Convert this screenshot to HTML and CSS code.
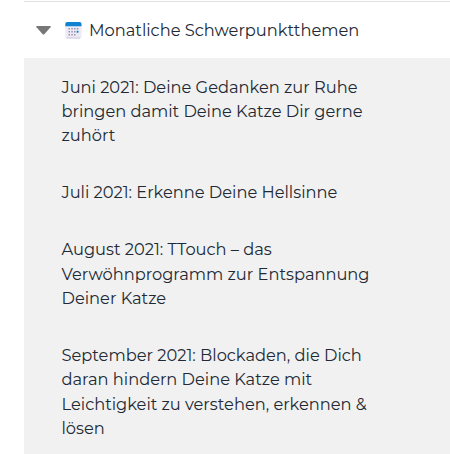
FILE: index.html
```
<!DOCTYPE html>
<html lang="de">
<head>
    <meta charset="UTF-8">
    <title>Monatliche Schwerpunktthemen</title>
    <link rel="stylesheet" href="styles.css">
</head>
<body>
    <nav class="menu">
        <div class="menu-header">
            <svg class="arrow" width="15" height="9" viewBox="0 0 15 9">
                <path d="M0.8 0H14.2Q15.2 0.3 14.5 1.2L8.3 8.2Q7.5 9 6.7 8.2L0.5 1.2Q-0.2 0.3 0.8 0Z" fill="#777"/>
            </svg>
            <svg class="calendar" width="17" height="17" viewBox="0 0 17 17">
                <rect x="0.3" y="0.5" width="16.2" height="16" rx="2" fill="#eeeaf5"/>
                <path d="M0.3 4.2V2Q0.3 0 2.3 0H14.5Q16.5 0 16.5 2V4.2Z" fill="#0f83d2"/>
                <path d="M1.5 16H15.3" stroke="#cfc8dc" stroke-width="1"/>
                <path d="M3.5 6.7H5M6.3 6.7H7.8M9 6.7H10.5M11.8 6.7H13.3M3.5 9.7H5M6.3 9.7H7.8M9 9.7H10.5M3.5 12.7H5M6.3 12.7H7.8M9 12.7H10.5" stroke="#9b93ad" stroke-width="1.5"/>
                <rect x="11.6" y="8.8" width="1.9" height="1.9" fill="#0f83d2"/>
            </svg>
            <span class="title">Monatliche Schwerpunktthemen</span>
        </div>
        <ul class="topics">
            <li>Juni 2021: Deine Gedanken zur Ruhe<br>bringen damit Deine Katze Dir gerne<br>zuhört</li>
            <li>Juli 2021: Erkenne Deine Hellsinne</li>
            <li>August 2021: TTouch – das<br>Verwöhnprogramm zur Entspannung<br>Deiner Katze</li>
            <li>September 2021: Blockaden, die Dich<br>daran hindern Deine Katze mit<br>Leichtigkeit zu verstehen, erkennen &amp;<br>lösen</li>
        </ul>
    </nav>
</body>
</html>
```
FILE: styles.css
```
body {
    margin: 0;
    background: #fff;
    color: #212934;
    font-family: Montserrat, Inter, sans-serif;
    font-size: 16.25px;
    font-weight: 370;
    line-height: 1.5;
}
.menu {
    height: 453px;
    margin: 1px 0 0 24px;
    border-top: 1px solid #e1e1e1;
    box-sizing: border-box;
    overflow: hidden;
}
.menu-header {
    display: flex;
    align-items: center;
    height: 56px;
    padding-left: 12px;
}
.arrow {
    margin-right: 14px;
}
.calendar {
    margin-right: 7px;
}
.title {
    padding-top: 0.5px;
    white-space: nowrap;
}
.topics {
    height: 396px;
    margin: 0;
    padding: 0.4px 0 0 37.5px;
    background: #f1f1f1;
    list-style: none;
    box-sizing: border-box;
}
.topics li {
    padding: 1em 0;
    white-space: nowrap;
}
```
